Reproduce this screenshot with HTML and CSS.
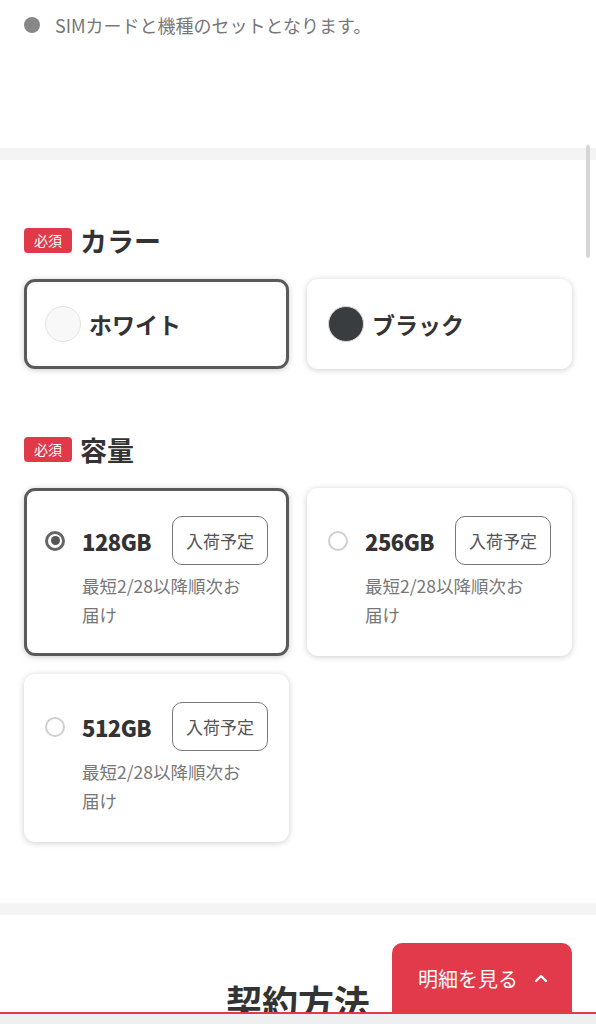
FILE: index.html
```html
<!DOCTYPE html>
<html lang="ja">
<head>
  <meta charset="UTF-8">
  <title>機種選択</title>
  <link rel="stylesheet" href="styles.css">
</head>
<body>
  <div class="note">
    <span class="dot"></span>
    <span>SIMカードと機種のセットとなります。</span>
  </div>

  <div class="divider"></div>

  <section class="section">
    <h2 class="heading"><span class="required">必須</span>カラー</h2>
    <div class="options">
      <div class="card color-card selected">
        <span class="swatch white"></span>
        <span class="color-name">ホワイト</span>
      </div>
      <div class="card color-card">
        <span class="swatch black"></span>
        <span class="color-name">ブラック</span>
      </div>
    </div>

    <h2 class="heading second"><span class="required">必須</span>容量</h2>
    <div class="options">
      <div class="card cap-card selected">
        <div class="cap-row">
          <span class="radio checked"></span>
          <span class="cap-size">128GB</span>
          <span class="stock">入荷予定</span>
        </div>
        <p class="cap-note">最短2/28以降順次お届け</p>
      </div>
      <div class="card cap-card">
        <div class="cap-row">
          <span class="radio"></span>
          <span class="cap-size">256GB</span>
          <span class="stock">入荷予定</span>
        </div>
        <p class="cap-note">最短2/28以降順次お届け</p>
      </div>
      <div class="card cap-card">
        <div class="cap-row">
          <span class="radio"></span>
          <span class="cap-size">512GB</span>
          <span class="stock">入荷予定</span>
        </div>
        <p class="cap-note">最短2/28以降順次お届け</p>
      </div>
    </div>
  </section>

  <div class="divider"></div>

  <section class="section contract">
    <h2 class="contract-title">契約方法</h2>
  </section>

  <div class="scroll-thumb"></div>

  <button class="detail-tab">明細を見る
    <svg width="14" height="10" viewBox="0 0 14 10"><path d="M2 8 L7 3 L12 8" fill="none" stroke="#fff" stroke-width="2.4" stroke-linecap="round" stroke-linejoin="round"/></svg>
  </button>
  <div class="footer-bar"></div>
</body>
</html>
```

FILE: styles.css
```css
body {
  margin: 0;
  background: #fff;
  color: #333;
  font-family: "Noto Sans CJK JP", "Noto Sans", sans-serif;
}
.note {
  box-sizing: border-box;
  height: 148px;
  padding: 12px 24px 0;
  display: flex;
  align-items: flex-start;
  gap: 15px;
  font-size: 18px;
  line-height: 26px;
  color: #777;
}
.dot {
  width: 16px;
  height: 16px;
  margin-top: 5px;
  border-radius: 50%;
  background: #888;
  flex-shrink: 0;
}
.divider {
  height: 12px;
  background: #f4f4f4;
}
.section {
  padding: 67px 24px 61px;
}
.heading {
  display: flex;
  align-items: center;
  height: 27px;
  margin: 0 0 25px;
  font-size: 27px;
  font-weight: bold;
  color: #333;
}
.heading.second {
  margin-top: 67px;
}
.required {
  display: inline-block;
  height: 25px;
  line-height: 25px;
  padding: 0 10px;
  margin-right: 8px;
  border-radius: 4px;
  background: #e03a4a;
  color: #fff;
  font-size: 14px;
  font-weight: normal;
}
.options {
  display: grid;
  grid-template-columns: 1fr 1fr;
  gap: 18px;
}
.card {
  box-sizing: border-box;
  border: 3px solid transparent;
  border-radius: 11px;
  background: #fff;
  box-shadow: 0 1px 6px rgba(0, 0, 0, 0.2);
}
.card.selected {
  border-color: #5a5a5a;
}
.color-card {
  height: 90px;
  display: flex;
  align-items: center;
  padding: 0 18px;
}
.swatch {
  box-sizing: border-box;
  width: 36px;
  height: 36px;
  border-radius: 50%;
  margin-right: 8px;
}
.swatch.white {
  background: #f8f8f8;
  border: 1px solid #e4e4e4;
}
.swatch.black {
  background: #3a3d3f;
  border: 1px solid #d8d8d8;
}
.color-name {
  font-size: 23px;
  font-weight: bold;
  color: #333;
}
.cap-card {
  padding: 25px 18px 24px;
}
.cap-row {
  display: flex;
  align-items: center;
  height: 49px;
}
.radio {
  box-sizing: border-box;
  width: 20px;
  height: 20px;
  border-radius: 50%;
  border: 2px solid #cfcfcf;
  flex-shrink: 0;
  display: flex;
  align-items: center;
  justify-content: center;
}
.radio.checked {
  border: 3px solid #666;
}
.radio.checked::after {
  content: "";
  width: 9px;
  height: 9px;
  border-radius: 50%;
  background: #555;
}
.cap-size {
  margin-left: 17px;
  font-size: 22px;
  font-weight: 900;
  letter-spacing: -0.5px;
  color: #333;
}
.stock {
  box-sizing: border-box;
  width: 96px;
  height: 49px;
  margin-left: auto;
  border: 1.5px solid #777;
  border-radius: 10px;
  display: flex;
  align-items: center;
  justify-content: center;
  font-size: 17px;
  color: #555;
}
.cap-note {
  margin: 6px 0 0;
  padding: 0 14px 0 37px;
  font-size: 17.5px;
  line-height: 29px;
  color: #777;
}
.contract {
  padding-top: 62px;
  height: 300px;
}
.contract-title {
  margin: 0;
  text-align: center;
  font-size: 36px;
  line-height: 48px;
  font-weight: bold;
  color: #333;
}
.scroll-thumb {
  position: fixed;
  top: 145px;
  right: 6px;
  width: 4px;
  height: 113px;
  border-radius: 2px;
  background: #d6d6d6;
}
.detail-tab {
  position: fixed;
  right: 24px;
  bottom: 11px;
  width: 180px;
  height: 70px;
  border: none;
  border-radius: 10px 10px 0 0;
  background: #e23a4a;
  color: #fff;
  font-family: "Noto Sans CJK JP", sans-serif;
  font-size: 20px;
  display: flex;
  align-items: center;
  justify-content: center;
  gap: 16px;
  padding: 0 0 0 2px;
}
.footer-bar {
  position: fixed;
  left: 0;
  right: 0;
  bottom: 0;
  height: 10px;
  border-top: 2px solid #e23a4a;
  background: #eeeff1;
}
```
